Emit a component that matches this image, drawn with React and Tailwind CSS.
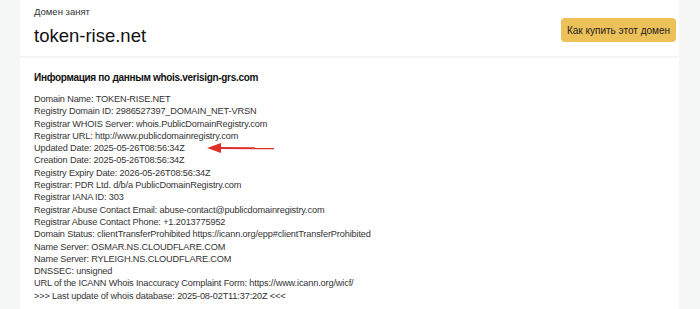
const lines = [
  'Domain Name: TOKEN-RISE.NET',
  'Registry Domain ID: 2986527397_DOMAIN_NET-VRSN',
  'Registrar WHOIS Server: whois.PublicDomainRegistry.com',
  'Registrar URL: http://www.publicdomainregistry.com',
  'Updated Date: 2025-05-26T08:56:34Z',
  'Creation Date: 2025-05-26T08:56:34Z',
  'Registry Expiry Date: 2026-05-26T08:56:34Z',
  'Registrar: PDR Ltd. d/b/a PublicDomainRegistry.com',
  'Registrar IANA ID: 303',
  'Registrar Abuse Contact Email: abuse-contact@publicdomainregistry.com',
  'Registrar Abuse Contact Phone: +1.2013775952',
  'Domain Status: clientTransferProhibited https://icann.org/epp#clientTransferProhibited',
  'Name Server: OSMAR.NS.CLOUDFLARE.COM',
  'Name Server: RYLEIGH.NS.CLOUDFLARE.COM',
  'DNSSEC: unsigned',
  'URL of the ICANN Whois Inaccuracy Complaint Form: https://www.icann.org/wicf/',
  '>>> Last update of whois database: 2025-08-02T11:37:20Z <<<',
]

export default function App() {
  return (
    <div className="flex h-[309px] w-[700px] overflow-hidden bg-[#f6f8f8] font-['Liberation_Sans',Arial,sans-serif] text-[#222]">
      <div className="ml-[20px] w-[659px] bg-white">
        <div className="flex items-start justify-between px-[14px] pt-[6px] h-[56px]">
          <div>
            <div className="text-[9.5px] leading-[12px] text-[#333]">Домен занят</div>
            <div className="mt-[6px] text-[18.5px] leading-[24px] text-[#111]">token-rise.net</div>
          </div>
          <button className="mt-[12px] mr-[-11px] h-[24px] w-[115px] whitespace-nowrap rounded-[4px] bg-[#edc15a] text-[10px] text-[#222]">
            Как купить этот домен
          </button>
        </div>
        <div className="h-[2px] bg-[#f4f6f6]" />
        <div className="px-[14px] pt-[13px]">
          <div className="text-[10px] font-bold leading-[14px] tracking-[-0.3px] text-[#111]">Информация по данным whois.verisign-grs.com</div>
          <div className="relative mt-[8px] text-[9.2px] leading-[12.3px] tracking-[-0.15px] text-[#333]">
            {lines.map((l) => (
              <div key={l}>{l}</div>
            ))}
            <svg className="absolute left-[173px] top-[49px]" width="70" height="12" viewBox="0 0 70 12">
              <line x1="12" y1="6" x2="67" y2="6.3" stroke="#e0302a" strokeWidth="2" />
              <polygon points="0,6 14,1 14,11" fill="#e0302a" />
            </svg>
          </div>
        </div>
      </div>
    </div>
  )
}
